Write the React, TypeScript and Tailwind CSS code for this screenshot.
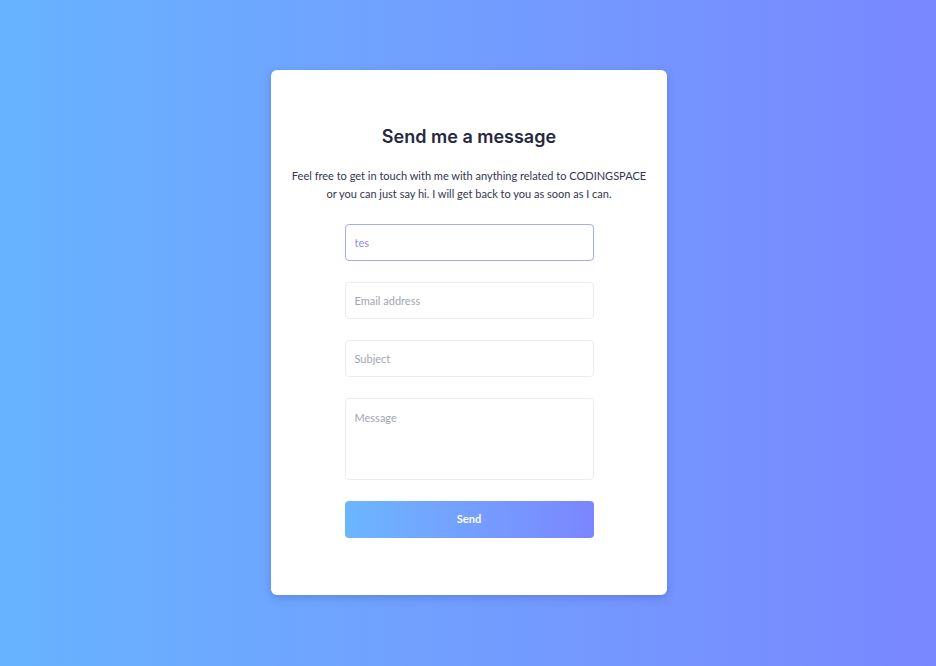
import { useState } from 'react';

export default function App() {
  const [name, setName] = useState('tes');

  return (
    <div
      className="flex min-h-[666px] w-full items-start justify-center bg-gradient-to-r from-[#67b3ff] to-[#7987ff] pl-[2px] pt-[70px]"
      style={{ fontFamily: 'Lato, "Noto Sans", sans-serif' }}
    >
      <div className="flex h-[525px] w-[396px] flex-col items-center rounded-md bg-white pt-[53px] shadow-[0_3px_8px_rgba(40,60,140,0.25)]">
        <h1
          className="text-[18px] font-semibold text-[#25283f]"
          style={{ fontFamily: 'Inter, "Noto Sans", sans-serif' }}
        >
          Send me a message
        </h1>
        <p className="mt-[17px] text-center text-[11px] leading-[18px] text-[#33364f]">
          Feel free to get in touch with me with anything related to CODINGSPACE
          <br />
          or you can just say hi. I will get back to you as soon as I can.
        </p>

        <form className="mt-[21px] flex w-[249px] flex-col gap-[21px]" onSubmit={(e) => e.preventDefault()}>
          <input
            type="text"
            value={name}
            onChange={(e) => setName(e.target.value)}
            className="h-[37px] rounded-[4px] border border-[#a9aaf5] px-[9px] text-[11px] text-[#8a8ff5] caret-[#8a8ff5] outline-none"
          />
          <input
            type="email"
            placeholder="Email address"
            className="h-[37px] rounded-[4px] border border-[#ececf0] px-[9px] text-[11px] text-[#3b3e55] outline-none placeholder:text-[#a4a4b3]"
          />
          <input
            type="text"
            placeholder="Subject"
            className="h-[37px] rounded-[4px] border border-[#ececf0] px-[9px] text-[11px] text-[#3b3e55] outline-none placeholder:text-[#a4a4b3]"
          />
          <textarea
            placeholder="Message"
            className="h-[82px] resize-none rounded-[4px] border border-[#ececf0] px-[9px] py-[11px] text-[11px] text-[#3b3e55] outline-none placeholder:text-[#a4a4b3]"
          />
          <button
            type="submit"
            className="h-[37px] rounded-[4px] bg-gradient-to-r from-[#6bb6ff] to-[#7a86ff] text-[11px] font-bold text-white"
          >
            Send
          </button>
        </form>
      </div>
    </div>
  );
}
